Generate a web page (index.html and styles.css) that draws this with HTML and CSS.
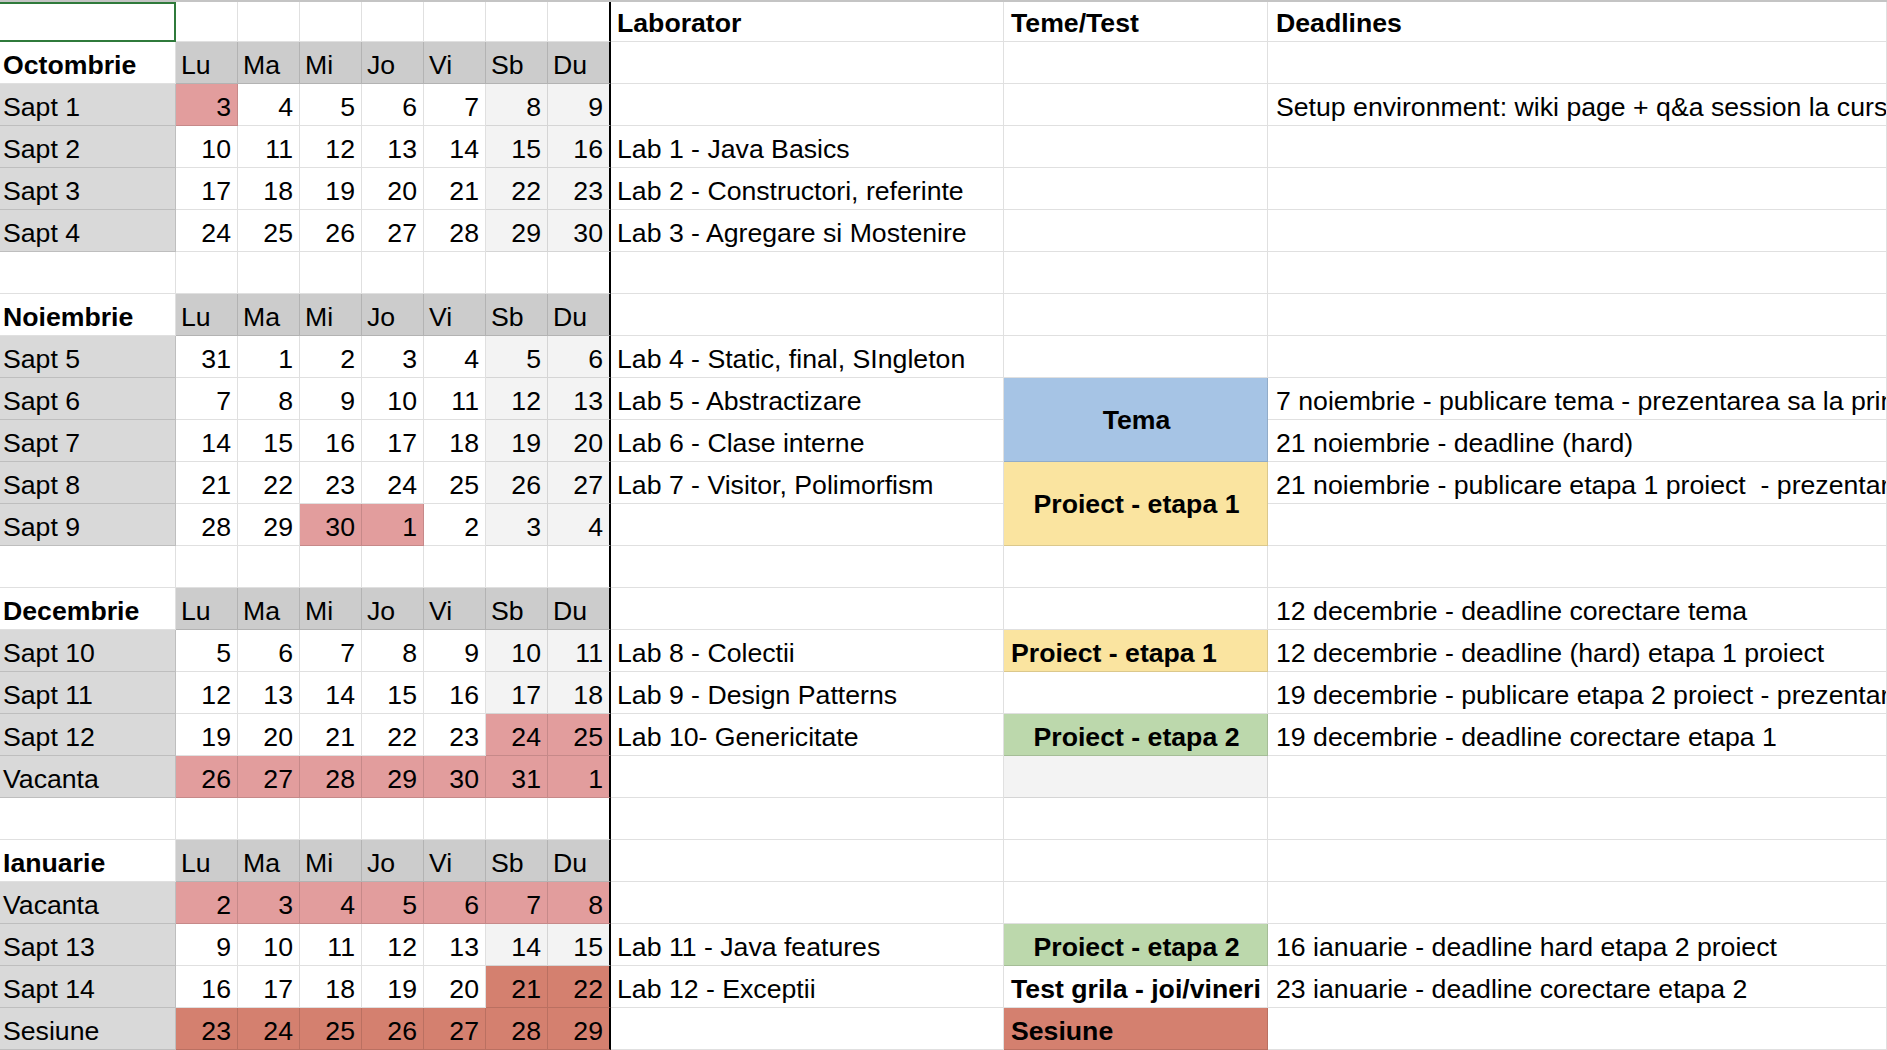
FILE: index.html
```html
<!DOCTYPE html>
<html>
    <head>
        <meta charset="utf-8">
        <title>Calendar laborator</title>
        <link rel="stylesheet" href="styles.css">
    </head>
    <body>
        <div class="sheet">
            <!-- header -->
            <div class="row">
                <div class="c sel"></div>
                <div class="c"></div><div class="c"></div><div class="c"></div><div class="c"></div><div class="c"></div><div class="c"></div><div class="c"></div>
                <div class="c b">Laborator</div>
                <div class="c b">Teme/Test</div>
                <div class="c b">Deadlines</div>
            </div>

            <!-- octombrie -->
            <div class="row">
                <div class="c mo">Octombrie</div>
                <div class="c hd">Lu</div><div class="c hd">Ma</div><div class="c hd">Mi</div><div class="c hd">Jo</div><div class="c hd">Vi</div><div class="c hd">Sb</div><div class="c hd">Du</div>
                <div class="c"></div><div class="c"></div><div class="c"></div>
            </div>
            <div class="row">
                <div class="c wk">Sapt 1</div>
                <div class="c n off">3</div><div class="c n">4</div><div class="c n">5</div><div class="c n">6</div><div class="c n">7</div><div class="c n we">8</div><div class="c n we">9</div>
                <div class="c"></div>
                <div class="c"></div>
                <div class="c">Setup environment: wiki page + q&amp;a session la curs</div>
            </div>
            <div class="row">
                <div class="c wk">Sapt 2</div>
                <div class="c n">10</div><div class="c n">11</div><div class="c n">12</div><div class="c n">13</div><div class="c n">14</div><div class="c n we">15</div><div class="c n we">16</div>
                <div class="c">Lab 1 - Java Basics</div>
                <div class="c"></div>
                <div class="c"></div>
            </div>
            <div class="row">
                <div class="c wk">Sapt 3</div>
                <div class="c n">17</div><div class="c n">18</div><div class="c n">19</div><div class="c n">20</div><div class="c n">21</div><div class="c n we">22</div><div class="c n we">23</div>
                <div class="c">Lab 2 - Constructori, referinte</div>
                <div class="c"></div>
                <div class="c"></div>
            </div>
            <div class="row">
                <div class="c wk">Sapt 4</div>
                <div class="c n">24</div><div class="c n">25</div><div class="c n">26</div><div class="c n">27</div><div class="c n">28</div><div class="c n we">29</div><div class="c n we">30</div>
                <div class="c">Lab 3 - Agregare si Mostenire</div>
                <div class="c"></div>
                <div class="c"></div>
            </div>
            <div class="row">
                <div class="c"></div>
                <div class="c"></div><div class="c"></div><div class="c"></div><div class="c"></div><div class="c"></div><div class="c"></div><div class="c"></div>
                <div class="c"></div><div class="c"></div><div class="c"></div>
            </div>

            <!-- noiembrie -->
            <div class="row">
                <div class="c mo">Noiembrie</div>
                <div class="c hd">Lu</div><div class="c hd">Ma</div><div class="c hd">Mi</div><div class="c hd">Jo</div><div class="c hd">Vi</div><div class="c hd">Sb</div><div class="c hd">Du</div>
                <div class="c"></div><div class="c"></div><div class="c"></div>
            </div>
            <div class="row">
                <div class="c wk">Sapt 5</div>
                <div class="c n">31</div><div class="c n">1</div><div class="c n">2</div><div class="c n">3</div><div class="c n">4</div><div class="c n we">5</div><div class="c n we">6</div>
                <div class="c">Lab 4 - Static, final, SIngleton</div>
                <div class="c"></div>
                <div class="c"></div>
            </div>
            <div class="row">
                <div class="c wk">Sapt 6</div>
                <div class="c n">7</div><div class="c n">8</div><div class="c n">9</div><div class="c n">10</div><div class="c n">11</div><div class="c n we">12</div><div class="c n we">13</div>
                <div class="c">Lab 5 - Abstractizare</div>
                <div class="c b mid span2 tema">Tema</div>
                <div class="c">7 noiembrie - publicare tema - prezentarea sa la primul curs</div>
            </div>
            <div class="row">
                <div class="c wk">Sapt 7</div>
                <div class="c n">14</div><div class="c n">15</div><div class="c n">16</div><div class="c n">17</div><div class="c n">18</div><div class="c n we">19</div><div class="c n we">20</div>
                <div class="c">Lab 6 - Clase interne</div>
                <div class="c">21 noiembrie - deadline (hard)</div>
            </div>
            <div class="row">
                <div class="c wk">Sapt 8</div>
                <div class="c n">21</div><div class="c n">22</div><div class="c n">23</div><div class="c n">24</div><div class="c n">25</div><div class="c n we">26</div><div class="c n we">27</div>
                <div class="c">Lab 7 - Visitor, Polimorfism</div>
                <div class="c b mid span2 p1">Proiect - etapa 1</div>
                <div class="c">21 noiembrie - publicare etapa 1 proiect &nbsp;- prezentare la curs</div>
            </div>
            <div class="row">
                <div class="c wk">Sapt 9</div>
                <div class="c n">28</div><div class="c n">29</div><div class="c n off">30</div><div class="c n off">1</div><div class="c n">2</div><div class="c n we">3</div><div class="c n we">4</div>
                <div class="c"></div>
                <div class="c"></div>
            </div>
            <div class="row">
                <div class="c"></div>
                <div class="c"></div><div class="c"></div><div class="c"></div><div class="c"></div><div class="c"></div><div class="c"></div><div class="c"></div>
                <div class="c"></div><div class="c"></div><div class="c"></div>
            </div>

            <!-- decembrie -->
            <div class="row">
                <div class="c mo">Decembrie</div>
                <div class="c hd">Lu</div><div class="c hd">Ma</div><div class="c hd">Mi</div><div class="c hd">Jo</div><div class="c hd">Vi</div><div class="c hd">Sb</div><div class="c hd">Du</div>
                <div class="c"></div>
                <div class="c"></div>
                <div class="c">12 decembrie - deadline corectare tema</div>
            </div>
            <div class="row">
                <div class="c wk">Sapt 10</div>
                <div class="c n">5</div><div class="c n">6</div><div class="c n">7</div><div class="c n">8</div><div class="c n">9</div><div class="c n we">10</div><div class="c n we">11</div>
                <div class="c">Lab 8 - Colectii</div>
                <div class="c b p1">Proiect - etapa 1</div>
                <div class="c">12 decembrie - deadline (hard) etapa 1 proiect</div>
            </div>
            <div class="row">
                <div class="c wk">Sapt 11</div>
                <div class="c n">12</div><div class="c n">13</div><div class="c n">14</div><div class="c n">15</div><div class="c n">16</div><div class="c n we">17</div><div class="c n we">18</div>
                <div class="c">Lab 9 - Design Patterns</div>
                <div class="c"></div>
                <div class="c">19 decembrie - publicare etapa 2 proiect - prezentare la curs</div>
            </div>
            <div class="row">
                <div class="c wk">Sapt 12</div>
                <div class="c n">19</div><div class="c n">20</div><div class="c n">21</div><div class="c n">22</div><div class="c n">23</div><div class="c n off">24</div><div class="c n off">25</div>
                <div class="c">Lab 10- Genericitate</div>
                <div class="c b ctr p2">Proiect - etapa 2</div>
                <div class="c">19 decembrie - deadline corectare etapa 1</div>
            </div>
            <div class="row">
                <div class="c wk">Vacanta</div>
                <div class="c n off">26</div><div class="c n off">27</div><div class="c n off">28</div><div class="c n off">29</div><div class="c n off">30</div><div class="c n off">31</div><div class="c n off">1</div>
                <div class="c"></div>
                <div class="c we"></div>
                <div class="c"></div>
            </div>
            <div class="row">
                <div class="c"></div>
                <div class="c"></div><div class="c"></div><div class="c"></div><div class="c"></div><div class="c"></div><div class="c"></div><div class="c"></div>
                <div class="c"></div><div class="c"></div><div class="c"></div>
            </div>

            <!-- ianuarie -->
            <div class="row">
                <div class="c mo">Ianuarie</div>
                <div class="c hd">Lu</div><div class="c hd">Ma</div><div class="c hd">Mi</div><div class="c hd">Jo</div><div class="c hd">Vi</div><div class="c hd">Sb</div><div class="c hd">Du</div>
                <div class="c"></div><div class="c"></div><div class="c"></div>
            </div>
            <div class="row">
                <div class="c wk">Vacanta</div>
                <div class="c n off">2</div><div class="c n off">3</div><div class="c n off">4</div><div class="c n off">5</div><div class="c n off">6</div><div class="c n off">7</div><div class="c n off">8</div>
                <div class="c"></div><div class="c"></div><div class="c"></div>
            </div>
            <div class="row">
                <div class="c wk">Sapt 13</div>
                <div class="c n">9</div><div class="c n">10</div><div class="c n">11</div><div class="c n">12</div><div class="c n">13</div><div class="c n we">14</div><div class="c n we">15</div>
                <div class="c">Lab 11 - Java features</div>
                <div class="c b ctr p2">Proiect - etapa 2</div>
                <div class="c">16 ianuarie - deadline hard etapa 2 proiect</div>
            </div>
            <div class="row">
                <div class="c wk">Sapt 14</div>
                <div class="c n">16</div><div class="c n">17</div><div class="c n">18</div><div class="c n">19</div><div class="c n">20</div><div class="c n ses">21</div><div class="c n ses">22</div>
                <div class="c">Lab 12 - Exceptii</div>
                <div class="c b">Test grila - joi/vineri</div>
                <div class="c">23 ianuarie - deadline corectare etapa 2</div>
            </div>
            <div class="row">
                <div class="c wk">Sesiune</div>
                <div class="c n ses">23</div><div class="c n ses">24</div><div class="c n ses">25</div><div class="c n ses">26</div><div class="c n ses">27</div><div class="c n ses">28</div><div class="c n ses">29</div>
                <div class="c"></div>
                <div class="c b ses">Sesiune</div>
                <div class="c"></div>
            </div>
        </div>
    </body>
</html>
```

FILE: styles.css
```css
body{
    margin: 0;
    overflow: hidden;
    background: #ffffff;
    color: #000000;
    font-family: "Liberation Sans", Arial, sans-serif;
    font-size: 26.67px;
}
.sheet{
    width: 1887px;
    display: grid;
    grid-template-columns: 176px repeat(6, 62px) 63px 393px 264px 1fr;
    grid-template-rows: 40px;
    grid-auto-rows: 42px;
    border-top: 2px solid #c4c4c4;
}
.row{
    display: contents;
}
.c{
    box-sizing: border-box;
    display: flex;
    align-items: flex-end;
    padding: 0 5px 3px 5px;
    line-height: 30px;
    white-space: nowrap;
    overflow: hidden;
    border-right: 1px solid rgba(0,0,0,0.12);
    border-bottom: 1px solid rgba(0,0,0,0.12);
}
/* coloana A */
.row > .c:first-child{
    padding-left: 3px;
}
/* linia neagra dupa duminica */
.row > .c:nth-child(8){
    border-right: 2px solid #000000;
}
/* laborator / teme / deadlines */
.row > .c:nth-child(9){
    padding-left: 6px;
}
.row > .c:nth-child(10){
    padding-left: 7px;
}
.row > .c:last-child{
    padding-left: 8px;
}
.sel{
    border: 2px solid #2f7a3b;
    border-left: 0;
}
.n{ justify-content: flex-end; padding-right: 6px; }
.b{ font-weight: bold; }
.mo{ font-weight: bold; }
.row > .ctr{ justify-content: center; padding-left: 5px; }
.row > .mid{ justify-content: center; align-items: center; padding: 0 5px; }
.span2{ grid-row: span 2; }

.wk{ background-color: #d9d9d9; }
.hd{ background-color: #cccccc; }
.we{ background-color: #f3f3f3; }
.off{ background-color: #e29d9d; }
.ses{ background-color: #d4806f; }
.tema{ background-color: #a6c4e5; }
.p1{ background-color: #fae4a0; }
.p2{ background-color: #bcd8ac; }
```
